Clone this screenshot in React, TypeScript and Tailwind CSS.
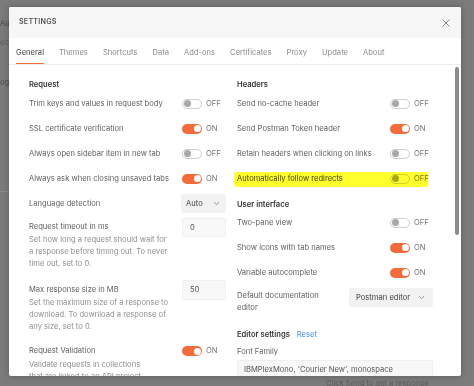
import React from "react";

const font = { fontFamily: "Inter, 'Noto Sans', sans-serif" };

function Toggle({ on }: { on: boolean }) {
  return (
    <div className="flex items-center gap-[4px]">
      {on ? (
        <div className="flex h-[10px] w-[20px] items-center justify-end rounded-full bg-[#f26b3a] pr-[1.5px]">
          <div className="h-[7px] w-[7px] rounded-full bg-white" />
        </div>
      ) : (
        <div className="flex h-[10px] w-[20px] items-center rounded-full border border-[#cfcfcf] bg-white pl-[1px]">
          <div className="h-[7px] w-[7px] rounded-full bg-[#a8a8a8]" />
        </div>
      )}
      <span className="text-[7.6px] leading-[10px] text-[#777]">{on ? "ON" : "OFF"}</span>
    </div>
  );
}

function ToggleRow({ label, on, hl }: { label: string; on: boolean; hl?: boolean }) {
  return (
    <div className="relative flex h-[25px] items-center">
      <span className={`w-[153px] whitespace-nowrap ${hl ? "text-[#444]" : "text-[#5f5f5f]"}`}>{label}</span>
      <Toggle on={on} />
      {hl && (
        <span className="pointer-events-none absolute left-[-3px] right-[5px] top-[6px] h-[15px] rounded-[3px] bg-[#ffff2e] mix-blend-multiply" />
      )}
    </div>
  );
}

function Chevron() {
  return (
    <svg width="7" height="5" viewBox="0 0 7 5" fill="none">
      <path d="M1 1.2 L3.5 3.6 L6 1.2" stroke="#8a8a8a" strokeWidth="0.9" />
    </svg>
  );
}

function Heading({ children }: { children: React.ReactNode }) {
  return <div className="h-[12px] text-[7.6px] font-semibold leading-[12px] text-[#333]">{children}</div>;
}

export default function App() {
  const tabs = ["General", "Themes", "Shortcuts", "Data", "Add-ons", "Certificates", "Proxy", "Update", "About"];
  return (
    <div className="relative h-[386px] w-[474px] overflow-hidden bg-[#7b7b7b]" style={font}>
      {/* background app */}
      <div className="flex h-full flex-col text-[7.6px] text-[#4a4a4a]">
        <div className="mt-[19px] leading-[10px]">Au</div>
        <div className="mt-[9px] leading-[10px] text-[#5a5a5a]">ec</div>
        <div className="mt-[30px] leading-[10px]">og</div>
        <div className="mt-[103px] h-[1px] w-[10px] bg-[#8a8a8a]" />
        <div className="mb-[-3px] mt-auto pl-[326px] leading-[10px] text-[#5c5c5c]">Click Send to get a response</div>
      </div>

      {/* modal */}
      <div className="absolute left-[9px] top-[7px] flex h-[369px] w-[452px] flex-col overflow-hidden rounded-[2px] bg-white shadow-[0_0_6px_rgba(0,0,0,0.25)]">
        <div className="flex h-[31px] shrink-0 items-center justify-between bg-[#f6f6f6] pl-[10px] pr-[11px]">
          <span className="text-[7.2px] font-semibold tracking-[0.2px] text-[#555]">SETTINGS</span>
          <svg width="8" height="8" viewBox="0 0 8 8">
            <path d="M0.5 0.5 L7.5 7.5 M7.5 0.5 L0.5 7.5" stroke="#7a7a7a" strokeWidth="0.9" />
          </svg>
        </div>
        <div className="flex h-[27px] shrink-0 gap-[15px] border-b border-[#ececec] pl-[7px]">
          {tabs.map((t, i) => (
            <div key={t} className="relative flex h-full items-center pt-[3px]">
              <span className={`text-[7.6px] ${i === 0 ? "text-[#444]" : "text-[#8c8c8c]"}`}>{t}</span>
              {i === 0 && <span className="absolute bottom-0 left-0 right-0 h-[1.5px] bg-[#f26b3a]" />}
            </div>
          ))}
        </div>

        <div className="relative flex-1">
          <div className="absolute right-[2px] top-[2px] h-[168px] w-[4px] rounded-full bg-[#8c8c8c]" />
          <div className="grid grid-cols-[197px_196px] gap-x-[11px] pl-[20px] pt-[14px] text-[7.6px] leading-[12px]">
            {/* left column */}
            <div className="flex flex-col">
              <Heading>Request</Heading>
              <ToggleRow label="Trim keys and values in request body" on={false} />
              <ToggleRow label="SSL certificate verification" on={true} />
              <ToggleRow label="Always open sidebar item in new tab" on={false} />
              <ToggleRow label="Always ask when closing unsaved tabs" on={true} />
              <div className="flex h-[25px] items-center">
                <span className="w-[152px] text-[#5f5f5f]">Language detection</span>
                <div className="flex h-[19px] w-[45px] items-center justify-between rounded-[2px] bg-[#f2f2f2] pl-[5px] pr-[6px]">
                  <span className="text-[#444]">Auto</span>
                  <Chevron />
                </div>
              </div>
              <div className="mt-[2px] flex items-start">
                <div className="w-[153px]">
                  <div className="mt-[3px] text-[#5f5f5f]">Request timeout in ms</div>
                  <div className="mt-[1px] text-[#8f8f8f]">
                    <div className="whitespace-nowrap">Set how long a request should wait for</div>
                    <div className="whitespace-nowrap">a response before timing out. To never</div>
                    <div className="whitespace-nowrap">time out, set to 0.</div>
                  </div>
                </div>
                <div className="flex h-[19px] w-[44px] items-center rounded-[2px] border border-[#f0f0f0] bg-[#f8f8f8] pl-[7px] text-[#555]">0</div>
              </div>
              <div className="mt-[10px] flex items-start">
                <div className="w-[153px]">
                  <div className="mt-[4px] text-[#5f5f5f]">Max response size in MB</div>
                  <div className="mt-[1px] text-[#8f8f8f]">
                    <div className="whitespace-nowrap">Set the maximum size of a response to</div>
                    <div className="whitespace-nowrap">download. To download a response of</div>
                    <div className="whitespace-nowrap">any size, set to 0.</div>
                  </div>
                </div>
                <div className="flex h-[20px] w-[44px] items-center rounded-[2px] border border-[#f0f0f0] bg-[#f8f8f8] pl-[7px] text-[#555]">50</div>
              </div>
              <div className="mt-[12px] flex h-[12px] items-center">
                <span className="w-[153px] text-[#5f5f5f]">Request Validation</span>
                <Toggle on={true} />
              </div>
              <div className="mt-[2px] text-[#8f8f8f]">
                <div className="whitespace-nowrap">Validate requests in collections</div>
                <div className="whitespace-nowrap">that are linked to an API project</div>
              </div>
            </div>

            {/* right column */}
            <div className="flex flex-col">
              <Heading>Headers</Heading>
              <ToggleRow label="Send no-cache header" on={false} />
              <ToggleRow label="Send Postman Token header" on={true} />
              <ToggleRow label="Retain headers when clicking on links" on={false} />
              <ToggleRow label="Automatically follow redirects" on={false} hl />
              <div className="mb-[-1px] mt-[8px]">
                <Heading>User interface</Heading>
              </div>
              <ToggleRow label="Two-pane view" on={false} />
              <ToggleRow label="Show icons with tab names" on={true} />
              <ToggleRow label="Variable autocomplete" on={true} />
              <div className="flex items-start">
                <div className="mt-[5px] w-[112px] text-[#5f5f5f]">
                  <div>Default documentation</div>
                  <div>editor</div>
                </div>
                <div className="mt-[3px] flex h-[19px] w-[84px] items-center justify-between rounded-[2px] bg-[#f2f2f2] pl-[7px] pr-[8px]">
                  <span className="text-[#444]">Postman editor</span>
                  <Chevron />
                </div>
              </div>
              <div className="mt-[15px] flex items-center gap-[7px]">
                <Heading>Editor settings</Heading>
                <span className="text-[#4a8fd8]">Reset</span>
              </div>
              <div className="mt-[5px] text-[#5f5f5f]">Font Family</div>
              <div className="mt-[2px] flex h-[20px] items-center rounded-[2px] border border-[#efefef] bg-[#f8f8f8] pl-[6px] text-[#555]">
                IBMPlexMono, 'Courier New', monospace
              </div>
            </div>
          </div>
        </div>
      </div>
    </div>
  );
}
